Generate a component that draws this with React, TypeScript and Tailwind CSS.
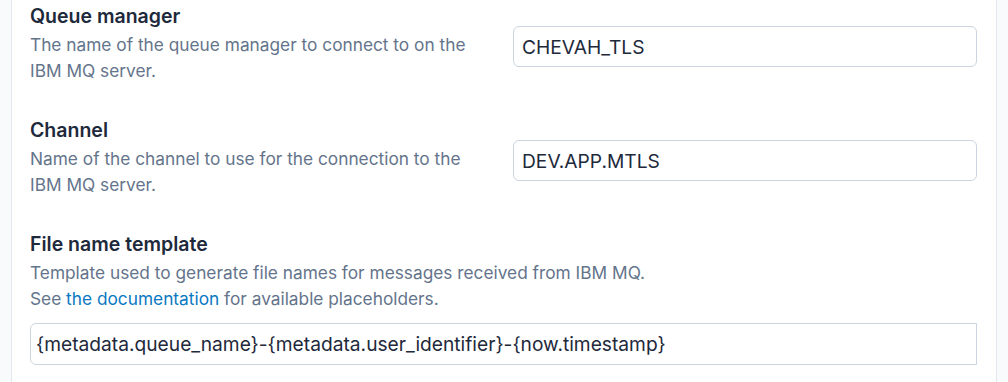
import React from 'react';

type Field = {
  label: string;
  help: string;
  value: string;
};

const inline: Field[] = [
  {
    label: 'Queue manager',
    help: 'The name of the queue manager to connect to on the IBM MQ server.',
    value: 'CHEVAH_TLS',
  },
  {
    label: 'Channel',
    help: 'Name of the channel to use for the connection to the IBM MQ server.',
    value: 'DEV.APP.MTLS',
  },
];

function Label({ children }: { children: React.ReactNode }) {
  return (
    <div className="text-[19.5px] font-semibold leading-6 text-[#1e293b]">{children}</div>
  );
}

function Help({ children }: { children: React.ReactNode }) {
  return <div className="mt-1 text-[17.3px] leading-[26px] text-[#64748b]">{children}</div>;
}

const inputCls =
  'w-full border border-[#cbd5e1] bg-white text-[19.2px] text-[#1e293b] outline-none';

export default function App() {
  return (
    <div className="min-h-screen bg-[#f8fafc] px-[11px] font-['Inter',sans-serif]">
      <div className="h-[382px] border-x border-[#e2e8f0] bg-white pl-[18px] pr-[19px] pt-1">
        {inline.map((f) => (
          <div key={f.label} className="mb-[34px] grid grid-cols-2 items-start gap-x-[19px]">
            <div>
              <Label>{f.label}</Label>
              <Help>{f.help}</Help>
            </div>
            <input
              readOnly
              value={f.value}
              className={`mt-[22px] h-[41px] rounded-md px-[8px] ${inputCls}`}
            />
          </div>
        ))}

        <div>
          <Label>File name template</Label>
          <Help>
            Template used to generate file names for messages received from IBM MQ.
            <br />
            See <a className="text-[#0a78c2]">the documentation</a> for available placeholders.
          </Help>
          <input
            readOnly
            value="{metadata.queue_name}-{metadata.user_identifier}-{now.timestamp}"
            className={`mt-[11px] h-[42px] rounded-l-md px-[5px] ${inputCls}`}
          />
        </div>
      </div>
    </div>
  );
}
